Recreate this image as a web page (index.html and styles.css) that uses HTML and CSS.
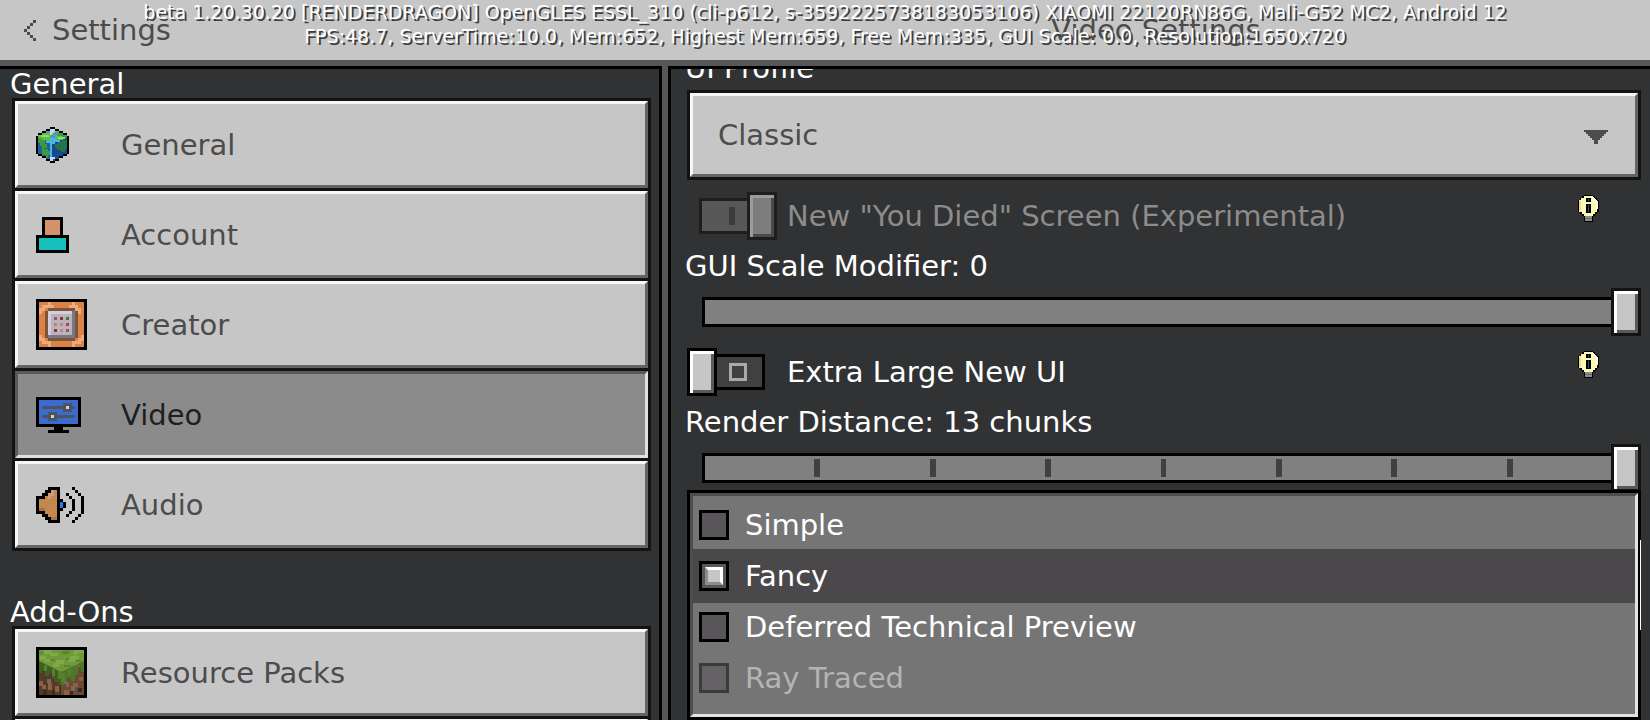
FILE: index.html
```html
<!doctype html>
<html lang="en">
<head>
  <meta charset="utf-8">
  <title>Video Settings</title>
  <link rel="stylesheet" href="styles.css">
</head>
<body>
  <header class="topbar">
    <button class="back" type="button">
      <svg width="12" height="21" viewBox="0 0 4 7"><path d="M3 0h1v1h-1zM2 1h1v1h-1zM1 2h1v1h-1zM0 3h1v1h-1zM1 4h1v1h-1zM2 5h1v1h-1zM3 6h1v1h-1z"/></svg>
      Settings
    </button>
    <h1>Video Settings</h1>
    <div class="debug">
      <p>beta 1.20.30.20 [RENDERDRAGON] OpenGLES ESSL_310 (cli-p612, s-3592225738183053106) XIAOMI 22120RN86G, Mali-G52 MC2, Android 12</p>
      <p>FPS:48.7, ServerTime:10.0, Mem:652, Highest Mem:659, Free Mem:335, GUI Scale: 0.0, Resolution:1650x720</p>
    </div>
  </header>

  <main>
    <nav class="sidebar">
      <h2>General</h2>
      <div class="menu">
        <button type="button">
          <span class="icon">
            <svg width="33" height="36" viewBox="0 0 33 36">
              <path d="M14 0h5v2h4v2h4v2h4v3h2v18h-2v2h-4v2h-4v3h-4v2h-5v-2h-4v-3h-4v-2h-4v-2h-2v-18h2v-3h4v-2h4v-2h4z"/>
              <path fill="#1f5f9c" d="M2 9h14v25h-2v-2h-4v-3h-4v-2h-4z"/>
              <path fill="#164a8c" d="M16 9h15v18h-4v2h-4v3h-4v2h-3z"/>
              <path fill="#5fbd4a" d="M14 2h5v2h4v2h4v2h4v3h-4v2h-4v2h-4v2h-5v-2h-4v-2h-4v-2h-4v-3h4v-2h4v-2h4z"/>
              <path fill="#3a9c3c" d="M21 6h6v2h4v3h-5v-2h-5zM2 11h4v2h3v4h2v4h-3v2h-2v-4h-2v-3h-2zM6 22h6v2h2v4h-2v3h-2v-3h-4z"/>
              <path fill="#217548" d="M19 17h3v-2h4v-2h5v9h-2v3h-4v-2h-4v-2h-2z"/>
              <path fill="#c4d9ea" d="M14 2h5v4h-3v2h-2zM14 30h5v2h-2v2h-3z"/>
              <path fill="#5690cf" d="M18 5h4v3h-3v3h-4v-3h3zM10 4h4v2h-4z"/>
              <path fill="#46b5ea" d="M14 11h6v2h4v2h-5v2h-3v13h-2v-14h-4v-2h4z"/>
              <path fill="#96d868" d="M5 8h8v2h-8zM22 10h7v2h-7z"/>
            </svg>
          </span>
          General
        </button>
        <button type="button">
          <span class="icon">
            <svg width="33" height="36" viewBox="0 0 11 12">
              <path d="M2 0h7v6h2v6h-11v-6h2z"/>
              <path fill="#d3916e" d="M3 1h5v5h-5z"/>
              <path fill="#17c0bd" d="M1 7h9v4h-9z"/>
            </svg>
          </span>
          Account
        </button>
        <button type="button">
          <span class="icon">
            <svg width="51" height="51" viewBox="0 0 17 17">
              <path d="M0 0h17v17h-17z"/>
              <path fill="#dd8246" d="M1 1h15v15h-15z"/>
              <path fill="#edab80" d="M4 1h1v1h1v1h-3v1h-1v1h-1v-2h1v-1h2zM12 1h1v1h1v1h1v2h-1v-1h-1v-1h-2v-1h1zM1 12h1v1h1v1h2v2h-1v-1h-2v-1h-1zM15 12h1v2h-1v1h-2v1h-1v-2h2v-1h1z"/>
              <path fill="#7b5638" d="M4 3h9v1h1v9h-1v1h-9v-1h-1v-9h1z"/>
              <path fill="#7c7784" d="M4 4h9v9h-9z"/>
              <path fill="#d3cedb" d="M4 4h8v1h-7v7h-1z"/>
              <path fill="#b8b3bd" d="M5 5h7v7h-7z"/>
              <path fill="#a05356" d="M6 6h1v1h-1zM10 10h1v1h-1z"/>
              <path fill="#8c3035" d="M8 6h1v1h-1zM6 10h1v1h-1z"/>
              <path fill="#4f6f38" d="M10 6h1v1h-1z"/>
              <path fill="#b58a4f" d="M6 8h1v1h-1z"/>
              <path fill="#c78387" d="M8 8h1v1h-1zM8 10h1v1h-1z"/>
              <path fill="#c03c45" d="M10 8h1v1h-1z"/>
            </svg>
          </span>
          Creator
        </button>
        <button type="button" class="selected" aria-current="page">
          <span class="icon">
            <svg width="45" height="36" viewBox="0 0 15 12">
              <path d="M0 0h15v10h-6v1h2v1h-7v-1h2v-1h-6z"/>
              <path fill="#3b6bd0" d="M1 1h13v8h-13z"/>
              <path fill="#4c545f" d="M2 3h7v-1h3v1h1v1h-1v1h-3v-1h-7zM2 6h2v-1h3v1h6v1h-6v1h-3v-1h-2z"/>
              <path fill="#d2d2d2" d="M10 3h1v1h-1zM5 6h1v1h-1z"/>
            </svg>
          </span>
          Video
        </button>
        <button type="button">
          <span class="icon">
            <svg width="48" height="36" viewBox="0 0 16 12">
              <path d="M4 0h4v4h1v1h1v2h-1v1h-1v4h-4v-1h-1v-1h-1v-1h-2v-6h2v-1h1v-1h1z"/>
              <path fill="#c28850" d="M5 1h2v10h-2v-1h-1v-1h-1v-1h-2v-4h2v-1h1v-1h1z"/>
              <path fill="#cf9c75" d="M5 1h1v2h-1v1h-1v-2h1z"/>
              <path fill="#a97340" d="M1 7h2v1h-2zM5 10h2v1h-2z"/>
              <path fill="#1c7df0" d="M8 5h1v2h-1z"/>
              <path d="M10 2h1v1h-1zM11 3h1v1h-1zM12 4h1v4h-1zM11 8h1v1h-1zM10 9h1v1h-1zM12 0h1v1h-1zM13 1h1v1h-1zM14 2h1v1h-1zM15 3h1v6h-1zM14 9h1v1h-1zM13 10h1v1h-1zM12 11h1v1h-1z"/>
            </svg>
          </span>
          Audio
        </button>
      </div>

      <h2>Add-Ons</h2>
      <div class="menu">
        <button type="button">
          <span class="icon">
            <svg width="51" height="51" viewBox="0 0 51 51">
              <path d="M0 0h51v51h-51z"/>
              <path fill="#6f9a3c" d="M3 3h45v12l-22 11-23-11z"/>
              <path fill="#82a948" d="M8 3h8v3h6v3h-8v-2h-6zM20 13h8v4h-5v3h-6v-4h3zM34 9h9v3h-4v3h-7v-3h2zM4 9h6v3h5v3h-6v-2h-5zM38 3h10v3h-7v2h-3z"/>
              <path fill="#5b8631" d="M26 4h7v3h-7zM14 12h5v2h-5zM28 18h7v2h-7zM30 11h3v2h-3zM40 13h5v2h-5zM3 5h4v2h-4z"/>
              <path fill="#415f22" d="M3 14l22 11v25h-22z"/>
              <path fill="#4e7627" d="M25 25l23-11v25h-23z"/>
              <path fill="#56802b" d="M8 18h3v6h-3zM16 22h3v7h-3zM22 24h3v8h-3zM25 26h4v9h-4zM32 22h3v7h-3zM41 18h3v7h-3z"/>
              <path fill="#533a29" d="M3 26h3v-2h3v5h4v-3h3v6h3v3h4v3h2v10h-22z"/>
              <path fill="#6b4a32" d="M25 38h3v-3h3v-4h4v3h4v-6h3v-8h3v5h3v23h-23z"/>
              <path fill="#8a6144" d="M3 34h4v4h3v4h-4v-3h-3zM12 36h4v7h-4zM19 39h4v6h-4zM30 35h3v5h-3zM37 36h5v4h-3v4h-4v-5h2zM28 43h5v5h-5zM43 30h4v4h-4z"/>
              <path fill="#3c2a20" d="M7 43h4v5h-4zM16 43h3v5h-3zM24 38h1v10h-1zM34 44h3v4h-3zM42 41h4v4h-4z"/>
              <path fill="#6d6b6e" d="M11 32h4v4h-4zM28 34h3v3h-3zM36 40h3v4h-3z"/>
              <path d="M0 48h51v3h-51z"/>
            </svg>
          </span>
          Resource Packs
        </button>
        <button type="button" aria-hidden="true" tabindex="-1"></button>
      </div>
    </nav>

    <section class="settings">
      <label class="caption first" for="profile">UI Profile</label>
      <div class="dropdown">
        <select id="profile">
          <option>Classic</option>
        </select>
        <svg class="arrow" width="24" height="14" viewBox="0 0 12 7"><path d="M0 0h12v1h-1v1h-1v1h-1v1h-1v1h-1v2h-2v-2h-1v-1h-1v-1h-1v-1h-1v-1h-1z"/></svg>
      </div>

      <div class="row disabled">
        <input class="toggle" type="checkbox" id="died" checked disabled>
        <label for="died">New "You Died" Screen (Experimental)</label>
        <svg class="bulb" width="21" height="27" viewBox="0 0 21 27">
          <path d="M6 0h9v1h2v2h2v2h2v12h-2v2h-2v2h-2v6h-9v-6h-2v-2h-2v-2h-2v-12h2v-2h2v-2h2z"/>
          <path fill="#fdf9b5" d="M6 1h9v2h2v2h2v12h-2v2h-2v2h-9v-2h-2v-2h-3v-12h2v-2h3z"/>
          <path fill="#fffde8" d="M14 2h2v2h2v2h2v8h-2v-7h-2v-2h-2z"/>
          <path fill="#e9d98e" d="M1 6h2v10h-2z"/>
          <path d="M8 3h5v4h-5zM8 9h5v9h-5z"/>
          <path fill="#2e4ea3" d="M10 4h1v2h-1zM10 10h1v7h-1z"/>
          <path fill="#8c8c8c" d="M7 21h7v5h-7z"/>
          <path fill="#6b6b6b" d="M7 23h7v1h-7z"/>
        </svg>
      </div>

      <label class="caption" for="scale">GUI Scale Modifier: 0</label>
      <input class="slider" type="range" id="scale" min="-2" max="0" value="0">

      <div class="row">
        <input class="toggle" type="checkbox" id="large">
        <label for="large">Extra Large New UI</label>
        <svg class="bulb" width="21" height="27" viewBox="0 0 21 27">
          <path d="M6 0h9v1h2v2h2v2h2v12h-2v2h-2v2h-2v6h-9v-6h-2v-2h-2v-2h-2v-12h2v-2h2v-2h2z"/>
          <path fill="#fdf9b5" d="M6 1h9v2h2v2h2v12h-2v2h-2v2h-9v-2h-2v-2h-3v-12h2v-2h3z"/>
          <path fill="#fffde8" d="M14 2h2v2h2v2h2v8h-2v-7h-2v-2h-2z"/>
          <path fill="#e9d98e" d="M1 6h2v10h-2z"/>
          <path d="M8 3h5v4h-5zM8 9h5v9h-5z"/>
          <path fill="#2e4ea3" d="M10 4h1v2h-1zM10 10h1v7h-1z"/>
          <path fill="#8c8c8c" d="M7 21h7v5h-7z"/>
          <path fill="#6b6b6b" d="M7 23h7v1h-7z"/>
        </svg>
      </div>

      <label class="caption" for="distance">Render Distance: 13 chunks</label>
      <input class="slider ticks" type="range" id="distance" min="5" max="13" value="13">

      <div class="options">
        <label><input type="radio" name="graphics"> Simple</label>
        <label class="active"><input type="radio" name="graphics" checked> Fancy</label>
        <label><input type="radio" name="graphics"> Deferred Technical Preview</label>
        <label class="off"><input type="radio" name="graphics" disabled> Ray Traced</label>
        <span class="scrollbar"></span>
      </div>
    </section>
  </main>
</body>
</html>
```

FILE: styles.css
```css
*, *::before, *::after { box-sizing: border-box; }

body {
  margin: 0;
  height: 100vh;
  display: flex;
  flex-direction: column;
  overflow: hidden;
  background: #585658;
  color: #fff;
  font: 29px/28px "DejaVu Sans", sans-serif;
}

h1, h2, p { margin: 0; font-size: inherit; font-weight: normal; }
button, select { font: inherit; color: inherit; border-radius: 0; }
svg { display: block; shape-rendering: crispEdges; }

/* top bar */
.topbar {
  position: relative;
  flex: none;
  display: flex;
  align-items: center;
  height: 60px;
  background: #c6c6c6;
  color: #4c4c4c;
}
.back {
  display: flex;
  align-items: center;
  gap: 16px;
  width: calc(40% + 2px);
  padding: 0 24px;
  border: 0;
  background: none;
}
.back svg { fill: #4c4c4c; }
.topbar h1 { flex: 1; text-align: center; }
.debug {
  position: absolute;
  top: 0;
  left: 0;
  right: 0;
  font-size: 19px;
  line-height: 24px;
  text-align: center;
  white-space: nowrap;
  color: #fff;
  text-shadow: 2px 2px #3e3e3e;
}

main {
  flex: 1;
  min-height: 0;
  display: flex;
  gap: 6px;
  margin-top: 6px;
}

/* left menu */
.sidebar {
  width: calc(40% + 2px);
  padding: 1px 8px 0 12px;
  border-top: 3px solid #000;
  border-right: 3px solid #000;
  background: #313233;
  overflow: hidden;
}
.sidebar h2 { margin-left: -2px; }
.menu {
  display: flex;
  flex-direction: column;
  gap: 3px;
  margin-bottom: 47px;
  padding: 3px;
  background: #131313;
}
.menu button {
  display: flex;
  align-items: center;
  gap: 34px;
  height: 87px;
  padding: 0 18px;
  border: 3px solid;
  border-color: #f7f7f7 #656465 #656465 #f7f7f7;
  background: #c6c6c6;
  color: #4c4c4c;
}
.menu .selected {
  border-color: #5a595a #e0e0e0 #e0e0e0 #5a595a;
  background: #8b8b8b;
  color: #1e1e1e;
}
.icon { width: 51px; }

/* right panel */
.settings {
  flex: 1;
  display: flex;
  flex-direction: column;
  padding: 0 9px 0 16px;
  border-top: 3px solid #000;
  border-left: 3px solid #000;
  background: #313233;
  overflow: hidden;
}
.settings > * { flex: none; }
.caption { margin: 12px 0 8px -2px; }
.caption.first { margin-top: -15px; }

.dropdown {
  position: relative;
  margin-bottom: 12px;
  padding: 3px;
  background: #131313;
}
.dropdown select {
  appearance: none;
  display: block;
  width: 100%;
  height: 84px;
  padding: 0 25px;
  border: 3px solid;
  border-color: #f7f7f7 #656465 #656465 #f7f7f7;
  background: #c6c6c6;
  color: #4c4c4c;
}
.arrow {
  position: absolute;
  top: 40px;
  right: 33px;
  fill: #4c4c4c;
  pointer-events: none;
}

.row {
  display: flex;
  align-items: center;
  gap: 10px;
  height: 48px;
}
.row label { flex: 1; }
.disabled label { color: #8c8c8c; }
.bulb { align-self: flex-start; margin: 3px 42px 0 0; }

/* switch: ::before is the track with its mark, ::after the knob */
.toggle {
  appearance: none;
  position: relative;
  width: 90px;
  height: 48px;
  margin: 0;
}
.toggle::before {
  content: "";
  position: absolute;
  inset: 6px 12px;
  border: 3px solid #000;
  background:
    linear-gradient(#404040, #404040) 30px 9px / 12px 12px no-repeat,
    linear-gradient(#aaa, #aaa) 27px 6px / 18px 18px no-repeat,
    #404040;
}
.toggle::after {
  content: "";
  position: absolute;
  top: 0;
  left: 0;
  width: 30px;
  height: 48px;
  border: 3px solid #000;
  background: #c6c6c6;
  box-shadow: inset 3px 3px #fff, inset -3px -3px #5a595a;
}
.toggle:checked::before {
  border-color: #1e1e1e;
  background: linear-gradient(#3c3c3c, #3c3c3c) 27px 6px / 6px 18px no-repeat, #585858;
}
.toggle:checked::after {
  left: 60px;
  border-color: #1e1e1e;
  background: #7c7d7c;
  box-shadow: inset 3px 3px #9b9b9b, inset -3px -3px #4a4a4a;
}

.slider {
  appearance: none;
  height: 48px;
  margin: 0 0 0 15px;
  background: none;
}
.slider::-webkit-slider-runnable-track {
  height: 30px;
  background: #808080;
  box-shadow: inset 0 0 0 3px #000;
}
.slider::-webkit-slider-thumb {
  appearance: none;
  width: 30px;
  height: 48px;
  margin-top: -9px;
  border: 3px solid #131313;
  background: #c6c6c6;
  box-shadow: inset 3px 3px #fff, inset -3px -3px #5a595a;
}
.ticks::-webkit-slider-runnable-track {
  background:
    repeating-linear-gradient(to right, #404040 0 3px, transparent 3px calc(12.5% - 5px), #404040 calc(12.5% - 5px) calc(12.5% - 2px)) center / 100% 18px no-repeat,
    #808080;
}
.slider + .row { margin-top: 12px; }

/* graphics mode list, covers the slider's lower edge */
.options {
  position: relative;
  display: flex;
  flex-direction: column;
  margin: 1px 3px 0;
  padding: 3px 0 11px;
  border: 3px solid;
  border-color: #4e4e50 #e4e2e4 #e4e2e4 #4e4e50;
  background: #757575;
  box-shadow: 0 0 0 3px #000;
}
.options label {
  display: flex;
  align-items: center;
  gap: 16px;
  height: 51px;
  padding-left: 6px;
}
.options .active {
  background: #4a484a;
  box-shadow: 0 -1px #4a484a, 0 2px #4a484a;
}
.options .off { color: #b4b4b4; }
.options input {
  appearance: none;
  width: 30px;
  height: 30px;
  margin: 0;
  border: 3px solid #000;
  background: #585658;
}
.options .off input { border-color: #3a3a3a; background: #646264; }
.options input:checked::before {
  content: "";
  display: block;
  width: 18px;
  height: 18px;
  margin: 3px;
  border: 3px solid;
  border-color: #fff #fff #8c8c8c #8c8c8c;
  background: #c6c6c6;
}
.scrollbar {
  position: absolute;
  top: 44px;
  right: -6px;
  width: 1px;
  height: 90px;
  background: #fff;
}
```
